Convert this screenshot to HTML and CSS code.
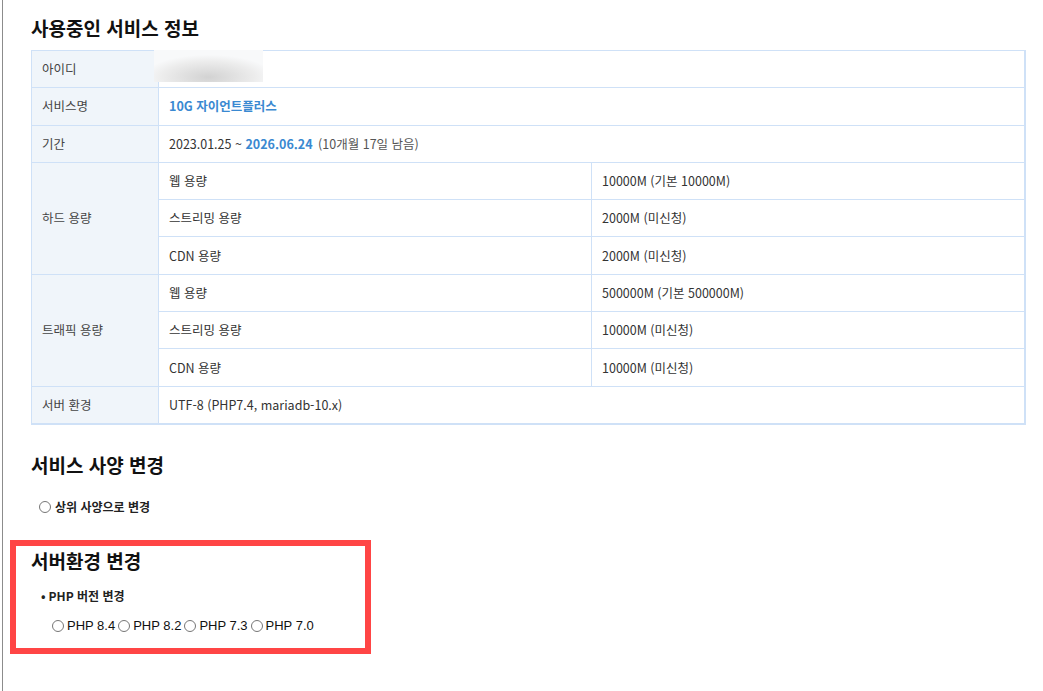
FILE: index.html
```html
<!DOCTYPE html>
<html lang="ko">

<head>
  <meta charset="UTF-8">
  <meta name="viewport" content="width=device-width, initial-scale=1.0">
  <title>서비스 정보</title>
  <link rel="stylesheet" href="styles.css">
</head>

<body>
  <div class="page">
    <section class="info">
      <h2>사용중인 서비스 정보</h2>
      <table class="info-table">
        <colgroup>
          <col class="col-label">
          <col class="col-sub">
          <col>
        </colgroup>
        <tr>
          <th>아이디</th>
          <td colspan="2" class="id-cell"><span class="blur"></span></td>
        </tr>
        <tr>
          <th>서비스명</th>
          <td colspan="2"><span class="point">10G 자이언트플러스</span></td>
        </tr>
        <tr>
          <th>기간</th>
          <td colspan="2">2023.01.25 ~ <span class="point">2026.06.24</span> <span class="remain">(10개월 17일 남음)</span></td>
        </tr>
        <tr>
          <th rowspan="3">하드 용량</th>
          <td>웹 용량</td>
          <td>10000M (기본 10000M)</td>
        </tr>
        <tr>
          <td>스트리밍 용량</td>
          <td>2000M (미신청)</td>
        </tr>
        <tr>
          <td>CDN 용량</td>
          <td>2000M (미신청)</td>
        </tr>
        <tr>
          <th rowspan="3">트래픽 용량</th>
          <td>웹 용량</td>
          <td>500000M (기본 500000M)</td>
        </tr>
        <tr>
          <td>스트리밍 용량</td>
          <td>10000M (미신청)</td>
        </tr>
        <tr>
          <td>CDN 용량</td>
          <td>10000M (미신청)</td>
        </tr>
        <tr>
          <th>서버 환경</th>
          <td colspan="2">UTF-8 (PHP7.4, mariadb-10.x)</td>
        </tr>
      </table>
    </section>

    <section class="spec">
      <h2>서비스 사양 변경</h2>
      <label class="spec-option"><input type="radio" name="spec"> 상위 사양으로 변경</label>
    </section>

    <section class="env">
      <h2>서버환경 변경</h2>
      <ul class="env-list">
        <li>PHP 버전 변경</li>
      </ul>
      <div class="php-options">
        <label><input type="radio" name="php">PHP 8.4</label>
        <label><input type="radio" name="php">PHP 8.2</label>
        <label><input type="radio" name="php">PHP 7.3</label>
        <label><input type="radio" name="php">PHP 7.0</label>
      </div>
    </section>
  </div>
</body>

</html>
```

FILE: styles.css
```css
body {
  margin: 0;
  background-color: #fff;
  font-family: "Noto Sans CJK KR", "Noto Sans", sans-serif;
  color: #333;
}

.page {
  margin-left: 2px;
  border-left: 1px solid #8c8c8c;
  padding: 16px 0 37px 28px;
  min-height: 638px;
}

h2 {
  margin: 0;
  font-size: 19px;
  line-height: 24px;
  font-weight: bold;
  color: #111;
}

/* service info table */
.info h2 {
  margin-bottom: 10px;
}

.info-table {
  width: 995px;
  border-collapse: collapse;
  border-top: 1px solid #cfe1f7;
  border-left: 1px solid #cfe1f7;
  border-right: 2px solid #cfe1f7;
  border-bottom: 2px solid #cfe1f7;
  font-size: 12.5px;
}

.col-label {
  width: 127px;
}

.col-sub {
  width: 433px;
}

.info-table th,
.info-table td {
  border: 1px solid #cfe1f7;
  height: 36.3px;
  padding: 0 10px;
  text-align: left;
  vertical-align: middle;
  line-height: 18px;
}

.info-table th {
  background-color: #f0f5fa;
  font-weight: normal;
  color: #444;
}

.info-table td {
  color: #333;
}

.point {
  color: #3a89d1;
  font-weight: bold;
}

.remain {
  color: #555;
  margin-left: 2px;
}

.id-cell {
  position: relative;
}

.blur {
  position: absolute;
  left: -5px;
  top: -1px;
  width: 109px;
  height: 32px;
  background: radial-gradient(ellipse 60% 70% at 50% 85%, #d2d2d2, #ececec 70%, #f8f9fa);
}

/* spec change */
.spec {
  margin-top: 28px;
}

.spec-option {
  display: flex;
  align-items: center;
  margin: 21px 0 0 8px;
  font-size: 12px;
  line-height: 18px;
  font-weight: bold;
  color: #222;
}

.spec-option input {
  margin: 0 4px 0 0;
  width: 12px;
  height: 12px;
}

/* server env (highlighted) */
.env {
  margin: 24px 0 0 -21px;
  width: 334px;
  border: 6px solid #ff4545;
  padding: 3px 0 12px 15px;
}

.env-list {
  list-style: none;
  margin: 14px 0 0;
  padding: 0 0 0 10px;
  font-size: 12px;
  line-height: 18px;
  font-weight: bold;
  color: #222;
}

.env-list li::before {
  content: "\2022";
  margin-right: 3px;
}

.php-options {
  display: flex;
  margin: 11px 0 0 21px;
  font-family: "Liberation Sans", Arial, sans-serif;
  font-size: 13px;
  line-height: 20px;
  color: #111;
}

.php-options label {
  display: flex;
  align-items: center;
  margin-right: 3px;
}

.php-options input {
  margin: 0 3px 0 0;
  width: 12px;
  height: 12px;
}
```
